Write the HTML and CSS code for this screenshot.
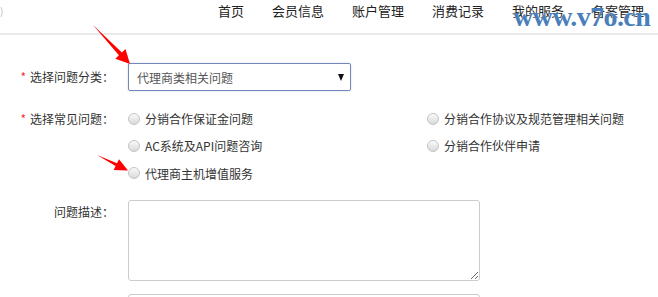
FILE: index.html
```html
<!DOCTYPE html>
<html lang="zh-CN">
<head>
  <meta charset="UTF-8">
  <title>问题反馈</title>
  <link rel="stylesheet" href="styles.css">
</head>
<body>

  <div class="header">
    <span class="logo-tail">)</span>
    <ul class="nav">
      <li>首页</li>
      <li>会员信息</li>
      <li>账户管理</li>
      <li>消费记录</li>
      <li>我的服务</li>
      <li>备案管理</li>
    </ul>
  </div>

  <div class="watermark">www.v7o.cn</div>

  <form class="ticket-form">
    <div class="row">
      <label class="label"><span class="req">*</span>选择问题分类：</label>
      <div class="select">
        <span>代理商类相关问题</span>
        <i class="caret"></i>
      </div>
    </div>

    <div class="row">
      <label class="label"><span class="req">*</span>选择常见问题：</label>
      <div class="radios">
        <div class="radio"><i class="dot"></i>分销合作保证金问题</div>
        <div class="radio"><i class="dot"></i>分销合作协议及规范管理相关问题</div>
        <div class="radio"><i class="dot"></i>AC系统及API问题咨询</div>
        <div class="radio"><i class="dot"></i>分销合作伙伴申请</div>
        <div class="radio"><i class="dot"></i>代理商主机增值服务</div>
      </div>
    </div>

    <div class="row row-desc">
      <label class="label">问题描述：</label>
      <textarea class="desc"></textarea>
    </div>

    <div class="row row-next">
      <span class="label"></span>
      <div class="next-box"></div>
    </div>
  </form>

  <!-- annotation arrows -->
  <svg class="marks" width="658" height="297" viewBox="0 0 658 297">
    <polygon fill="#f00" points="93,25 121.9,52.5 125.5,49.1 130,64 115.3,58.7 118.9,55.3"/>
    <polygon fill="#f00" points="97,155 117,163.3 119,159.2 128,170.5 113.6,170 115.6,165.9"/>
  </svg>

</body>
</html>
```

FILE: styles.css
```css
body {
  margin: 0;
  font-family: "Noto Sans CJK SC", "Liberation Sans", sans-serif;
  font-size: 12px;
  color: #333;
  background: #fff;
  position: relative;
  overflow: hidden;
}

.header {
  display: flex;
  height: 33px;
  border-bottom: 2px solid #e9e9e9;
}

.logo-tail {
  width: 218px;
  line-height: 22px;
  font-size: 10px;
  color: #bbb;
}

.nav {
  display: flex;
  gap: 28px;
  margin: 0;
  padding: 0;
  list-style: none;
}

.nav li {
  font-size: 13px;
  line-height: 21px;
  color: #222;
}

.watermark {
  position: absolute;
  left: 513px;
  top: 1px;
  font-family: "Liberation Serif", serif;
  font-weight: bold;
  font-size: 28px;
  letter-spacing: -0.6px;
  color: rgba(40, 105, 175, 0.85);
  text-shadow: 0 0 1px #fff;
}

.ticket-form {
  padding-top: 28px;
}

.row {
  display: flex;
  margin-bottom: 14px;
}

.label {
  width: 114px;
  flex-shrink: 0;
  margin-right: 14px;
  text-align: right;
  line-height: 27px;
  color: #333;
}

.req {
  color: #e33;
  margin-right: 4px;
}

.select {
  box-sizing: border-box;
  width: 223px;
  height: 28px;
  border: 1px solid #7487bb;
  border-radius: 2px;
  box-shadow: 0 0 2px rgba(80, 110, 180, 0.3);
  display: flex;
  align-items: center;
  justify-content: space-between;
  padding: 0 6px 0 8px;
  color: #555;
}

.caret {
  width: 0;
  height: 0;
  border-left: 3.5px solid transparent;
  border-right: 3.5px solid transparent;
  border-top: 7px solid #111;
}

.radios {
  display: grid;
  grid-template-columns: 299px auto;
  grid-auto-rows: 27px;
}

.radio {
  display: flex;
  align-items: center;
  line-height: 27px;
  color: #333;
}

.radio:nth-child(5) {
  margin-top: 1px;
}

.dot {
  width: 10px;
  height: 10px;
  border: 1px solid #c4c4c4;
  border-radius: 50%;
  background: linear-gradient(#fafafa, #d9d9d9);
  margin-right: 5px;
}

.row-desc {
  margin-top: 2px;
  margin-bottom: 13px;
}

.row-desc .label {
  line-height: 24px;
}

.desc {
  box-sizing: border-box;
  width: 352px;
  height: 81px;
  margin: 0;
  border: 1px solid #ccc;
  border-radius: 3px;
  resize: both;
  font-family: inherit;
}

.next-box {
  box-sizing: border-box;
  width: 352px;
  height: 30px;
  border: 1px solid #ccc;
  border-radius: 3px;
}

.marks {
  position: absolute;
  left: 0;
  top: 0;
  pointer-events: none;
}
```
